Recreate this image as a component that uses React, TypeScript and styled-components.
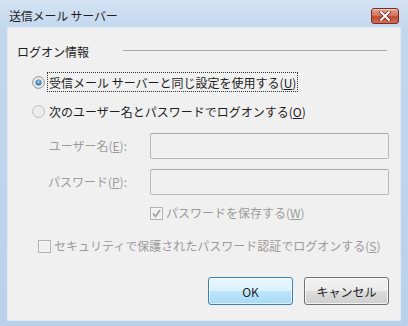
import React from 'react';
import styled, { createGlobalStyle } from 'styled-components';

const GlobalStyle = createGlobalStyle`
  html, body {
    margin: 0;
    padding: 0;
    background: #ffffff;
  }
  body {
    font-family: "Noto Sans CJK JP", "Noto Sans", sans-serif;
  }
`;

const Window = styled.div`
  width: 408px;
  height: 326px;
  box-sizing: border-box;
  display: flex;
  flex-direction: column;
  background: linear-gradient(180deg, #d3e2f3 0%, #c3d7ee 30px, #b9d1ea 100%);
  font-size: 12px;
`;

const TitleBar = styled.div`
  height: 28px;
  box-sizing: border-box;
  padding: 8px 9px 0 9px;
  display: flex;
  justify-content: space-between;
  align-items: flex-start;
`;

const Title = styled.span`
  color: #1e1e1e;
  line-height: 16px;
  letter-spacing: -0.2px;
`;

const CloseButton = styled.div`
  width: 28px;
  height: 16px;
  box-sizing: border-box;
  border: 1px solid #7a2b22;
  border-radius: 3px;
  background: linear-gradient(180deg, #e3a08f 0%, #d27560 45%, #c04a35 55%, #cf6d57 100%);
  box-shadow: inset 0 1px 0 rgba(255, 255, 255, 0.45);
  display: flex;
  align-items: center;
  justify-content: center;
`;

const Client = styled.div`
  flex: 1;
  margin: 0 8px 6px 8px;
  background: #f0f0f0;
  box-shadow: 0 0 0 1px #dfe8f3;
  display: flex;
  flex-direction: column;
  color: #1e1e1e;
`;

const Row = styled.div<{ $top: number; $h: number; $indent?: number }>`
  margin-top: ${p => p.$top}px;
  height: ${p => p.$h}px;
  padding-left: ${p => p.$indent ?? 0}px;
  display: flex;
  align-items: center;
  line-height: ${p => p.$h}px;
`;

const GroupLabel = styled.span`
  width: 106px;
`;

const GroupLine = styled.div`
  flex: 1;
  height: 1px;
  margin-right: 13px;
  margin-top: -4px;
  background: #a6a6a6;
`;

const OptionText = styled.span<{ $focus?: boolean }>`
  margin-left: 2px;
  height: 20px;
  line-height: 19px;
  padding: 0 1px;
  box-sizing: border-box;
  border: 1px dotted ${p => (p.$focus ? '#333' : 'transparent')};
`;

const CheckText = styled.span`
  margin-left: 3px;
  color: #9b9b9b;
`;

const FieldLabel = styled.span`
  width: 119px;
  text-align: right;
  color: #9b9b9b;
`;

const TextBox = styled.div`
  width: 239px;
  height: 26px;
  margin-left: 23px;
  box-sizing: border-box;
  border: 1px solid #b8b8b8;
  border-top-color: #a9a9a9;
  border-radius: 2px;
  background: #f0f0f0;
`;

const ButtonRow = styled.div`
  margin-top: 22px;
  padding-right: 11px;
  display: flex;
  justify-content: flex-end;
  gap: 11px;
`;

const Button = styled.div<{ $primary?: boolean }>`
  width: 85px;
  height: 28px;
  box-sizing: border-box;
  border-radius: 3px;
  display: flex;
  align-items: center;
  justify-content: center;
  color: #1e1e1e;
  border: 1px solid ${p => (p.$primary ? '#3c7fb1' : '#707070')};
  background: ${p =>
    p.$primary
      ? 'linear-gradient(180deg, #eaf6fd 0%, #d9f0fc 50%, #bee6fd 51%, #a7d9f5 100%)'
      : 'linear-gradient(180deg, #f2f2f2 0%, #ebebeb 50%, #dddddd 51%, #cfcfcf 100%)'};
  box-shadow: inset 0 0 0 1px ${p => (p.$primary ? 'rgba(255,255,255,0.6)' : 'rgba(255,255,255,0.7)')};
`;

const Key = styled.u`
  text-underline-offset: 1px;
`;

function Radio({ checked }: { checked?: boolean }) {
  return (
    <svg width="13" height="13" viewBox="0 0 13 13">
      <defs>
        <radialGradient id={checked ? 'rdOn' : 'rdOff'} cx="50%" cy="40%" r="60%">
          <stop offset="0%" stopColor={checked ? '#9fd3f5' : '#ffffff'} />
          <stop offset="100%" stopColor={checked ? '#1f5f94' : '#e2e2e2'} />
        </radialGradient>
      </defs>
      <circle cx="6.5" cy="6.5" r="5.8" fill="#f4f4f4" stroke={checked ? '#8a8a8a' : '#b6b6b6'} strokeWidth="1" />
      <circle cx="6.5" cy="6.5" r="4.3" fill={checked ? '#e6e6e6' : '#ececec'} />
      {checked ? <circle cx="6.5" cy="6.5" r="3" fill="url(#rdOn)" /> : null}
    </svg>
  );
}

function Check({ checked }: { checked?: boolean }) {
  return (
    <svg width="13" height="13" viewBox="0 0 13 13">
      <rect x="0.5" y="0.5" width="12" height="12" fill="#f4f4f4" stroke="#b3b3b3" />
      <rect x="2" y="2" width="9" height="9" fill="#f0f0f0" />
      {checked ? (
        <path d="M3 6.5 L5.5 9.5 L10 3" fill="none" stroke="#9d9d9d" strokeWidth="1.6" />
      ) : null}
    </svg>
  );
}

export default function App() {
  return (
    <>
      <GlobalStyle />
      <Window>
        <TitleBar>
          <Title>送信メール サーバー</Title>
          <CloseButton>
            <svg width="12" height="10" viewBox="0 0 12 10">
              <path d="M2 1 L10 9 M10 1 L2 9" stroke="#5a1a12" strokeWidth="3.2" strokeLinecap="square" />
              <path d="M2 1 L10 9 M10 1 L2 9" stroke="#ffffff" strokeWidth="2" strokeLinecap="square" />
            </svg>
          </CloseButton>
        </TitleBar>
        <Client>
          <Row $top={14} $h={20} $indent={9}>
            <GroupLabel>ログオン情報</GroupLabel>
            <GroupLine />
          </Row>
          <Row $top={9} $h={22} $indent={24}>
            <Radio checked />
            <OptionText $focus>
              受信メール サーバーと同じ設定を使用する(<Key>U</Key>)
            </OptionText>
          </Row>
          <Row $top={7} $h={22} $indent={24}>
            <Radio />
            <OptionText>
              次のユーザー名とパスワードでログオンする(<Key>O</Key>)
            </OptionText>
          </Row>
          <Row $top={11} $h={26}>
            <FieldLabel>
              ユーザー名(<Key>E</Key>):
            </FieldLabel>
            <TextBox />
          </Row>
          <Row $top={10} $h={26}>
            <FieldLabel>
              パスワード(<Key>P</Key>):
            </FieldLabel>
            <TextBox />
          </Row>
          <Row $top={9} $h={18} $indent={142}>
            <Check checked />
            <CheckText>
              パスワードを保存する(<Key>W</Key>)
            </CheckText>
          </Row>
          <Row $top={15} $h={18} $indent={30}>
            <Check />
            <CheckText>
              セキュリティで保護されたパスワード認証でログオンする(<Key>S</Key>)
            </CheckText>
          </Row>
          <ButtonRow>
            <Button $primary>OK</Button>
            <Button>キャンセル</Button>
          </ButtonRow>
        </Client>
      </Window>
    </>
  );
}
